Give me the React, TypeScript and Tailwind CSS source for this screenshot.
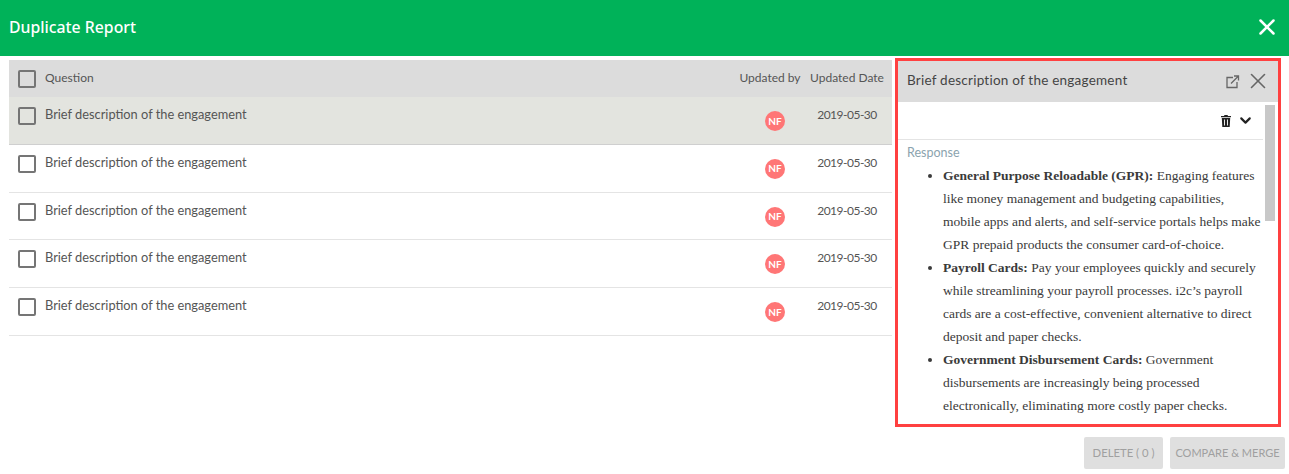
import { X, ChevronDown } from "lucide-react";

const rows = [0, 1, 2, 3, 4];

function Box() {
  return <span className="block w-[18px] h-[18px] shrink-0 border-2 border-[#757575] rounded-[2px]" />;
}

function Row({ active }: { active: boolean }) {
  return (
    <div className={`flex h-[47.75px] border-b ${active ? "bg-[#e3e4df] border-[#cfcfcf]" : "bg-white border-[#e4e4e4]"}`}>
      <div className="w-[36px] pl-[9px] pt-[10px]"><Box /></div>
      <div className="flex-1 pt-[8px] text-[12.8px] leading-[18px] text-[#555]">Brief description of the engagement</div>
      <div className="w-[64px] pt-[14px] flex justify-center -ml-[1px] mr-[1px]">
        <span className="w-5 h-5 rounded-full bg-[#ff7676] text-white text-[10px] font-bold flex items-center justify-center">NF</span>
      </div>
      <div className="w-[84px] pt-[9px] pr-[6px] text-center text-[12px] tracking-[-0.5px] leading-[18px] text-[#555]">2019-05-30</div>
    </div>
  );
}

export default function App() {
  return (
    <div className="w-[1289px] h-[474px] bg-white overflow-hidden font-['Lato',sans-serif]">
      <header className="h-[56px] bg-[#00b259] flex items-center justify-between pl-[9px] pr-[9px]">
        <h1 className="font-['Noto_Sans',sans-serif] text-[15.8px] font-medium text-white -mt-[1px]">Duplicate Report</h1>
        <X className="text-white -mt-[2px]" size={26} strokeWidth={2.3} />
      </header>
      <div className="flex items-start pl-[9px] pt-[2px]">
        <section className="w-[883px] mt-[2px]">
          <div className="flex h-[37px] bg-[#dcdcdc] items-center pr-[3px] text-[12px] text-[#555]">
            <div className="w-[36px] pl-[9px]"><Box /></div>
            <div className="flex-1 -mt-[1px]">Question</div>
            <div className="w-[70px] -mt-[1px] text-center">Updated by</div>
            <div className="w-[84px] -mt-[1px] text-center whitespace-nowrap">Updated Date</div>
          </div>
          {rows.map((r) => <Row key={r} active={r === 0} />)}
        </section>
        <aside className="ml-[3px] w-[386px] h-[369px] border-[3px] border-[#ff4040] flex flex-col overflow-hidden">
          <div className="h-[41px] shrink-0 bg-[#dcdcdc] flex items-center justify-between pl-[9px] pr-[7px]">
            <span className="text-[13.5px] tracking-[0.23px] text-[#444] -mt-[2px]">Brief description of the engagement</span>
            <div className="flex items-center gap-[5px] text-[#666] -mt-[2px]">
              <svg width="15" height="15" viewBox="0 0 15 15" fill="none" stroke="currentColor" strokeWidth="1.3" className="mt-[1px]">
                <path d="M8 3.5H2v10h10V8" />
                <path d="M6 9.5 13 2.5M9 2h4.5v4.5" />
              </svg>
              <X size={26} strokeWidth={1.5} />
            </div>
          </div>
          <div className="flex-1 flex min-h-0">
            <div className="flex-1 min-w-0">
              <div className="h-[38px] border-b border-[#e4e4e4] flex items-center justify-end gap-[6px] pr-[9px] text-[#222]">
                <svg width="10" height="12" viewBox="0 0 10 12" fill="currentColor">
                  <path d="M3.5 0h3l.5 1h3v1.2H0V1h3zM.8 3h8.4l-.5 9H1.3zM3 4.5v6h.9v-6zm3.1 0v6H7v-6z" fillRule="evenodd" />
                </svg>
                <ChevronDown size={17} strokeWidth={3} />
              </div>
              <div className="pl-[9px] pt-[5px] text-[12.5px] leading-[16px] text-[#8ba3ae]">Response</div>
              <ul className="list-disc pl-[45px] font-['Liberation_Serif',serif] text-[13.5px] leading-[23px] text-[#3a3a3a] pr-[2px] pt-[3px]">
                <li><b>General Purpose Reloadable (GPR):</b> Engaging features like money management and budgeting capabilities, mobile apps and alerts, and self-service portals helps make GPR prepaid products the consumer card-of-choice.</li>
                <li><b>Payroll Cards:</b> Pay your employees quickly and securely while streamlining your payroll processes. i2c’s payroll cards are a cost-effective, convenient alternative to direct deposit and paper checks.</li>
                <li><b>Government Disbursement Cards:</b> Government disbursements are increasingly being processed electronically, eliminating more costly paper checks.</li>
              </ul>
            </div>
            <div className="w-[15px] shrink-0 pt-[3px] pl-[2px] pr-[3px]">
              <div className="h-[116px] bg-[#c8c8c8]" />
            </div>
          </div>
        </aside>
      </div>
      <div className="flex justify-end gap-[7px] pr-[4px] pt-[10px]">
        <button className="w-[79px] h-[32px] bg-[#dfdfdf] rounded-[2px] text-[11.3px] text-[#a0a0a0]">DELETE ( 0 )</button>
        <button className="w-[115px] h-[32px] bg-[#dfdfdf] rounded-[2px] text-[11px] text-[#a0a0a0] whitespace-nowrap">COMPARE &amp; MERGE</button>
      </div>
    </div>
  );
}
